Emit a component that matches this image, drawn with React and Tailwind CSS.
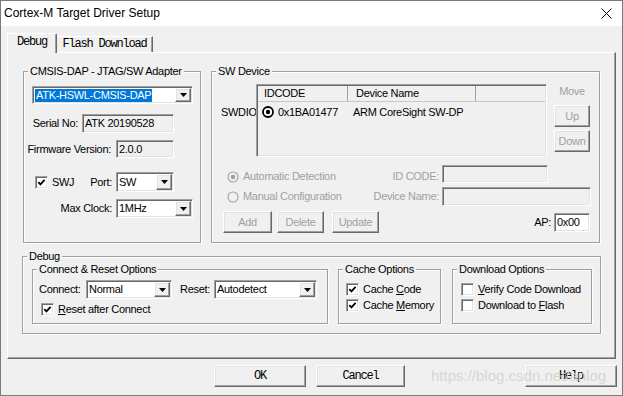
import React from 'react'

// classic win32 3D edges
const sunken = 'border border-t-[#a0a0a0] border-l-[#a0a0a0] border-r-white border-b-white shadow-[inset_1px_1px_0_#696969,inset_-1px_-1px_0_#e3e3e3]'
const raised = 'border border-t-white border-l-white border-r-[#696969] border-b-[#696969] shadow-[inset_-1px_-1px_0_#a0a0a0,inset_1px_1px_0_#e3e3e3]'
const group = 'border border-[#a0a0a0] shadow-[1px_1px_0_#fff,inset_1px_1px_0_#fff] min-w-0'
const legend = 'ml-[4px] px-[2px] bg-[#f0f0f0] leading-[13px]'
const mono = "font-['Liberation_Mono','DejaVu_Sans_Mono',monospace] text-[12px] tracking-[-1.2px]"

function Arrow() {
  return (
    <svg width="7" height="4" viewBox="0 0 7 4">
      <path d="M0 0h7L3.5 4z" fill="#000" />
    </svg>
  )
}

function Combo({ className, value, selected }) {
  return (
    <div className={`flex bg-white p-px ${sunken} ${className}`}>
      <div className="flex flex-1 items-center pl-[1px] overflow-hidden whitespace-nowrap">
        {selected ? (
          <span className="bg-[#0078d7] text-white leading-[13px] px-px">{value}</span>
        ) : (
          <span className="leading-[13px]">{value}</span>
        )}
      </div>
      <div className={`w-[16px] bg-[#f0f0f0] flex items-center justify-center ${raised}`}>
        <Arrow />
      </div>
    </div>
  )
}

function Field({ className, children, white }) {
  return (
    <div className={`flex items-center pl-[2px] whitespace-nowrap ${white ? 'bg-white' : 'bg-[#f0f0f0]'} ${sunken} ${className}`}>
      {children}
    </div>
  )
}

function Check({ checked }) {
  return (
    <div className={`w-[13px] h-[13px] shrink-0 bg-white flex items-center justify-center ${sunken}`}>
      {checked && (
        <svg width="9" height="9" viewBox="0 0 9 9">
          <path d="M1.3 4.2 L3.4 6.4 L7.6 1.8" stroke="#000" strokeWidth="1.8" fill="none" />
        </svg>
      )}
    </div>
  )
}

function Radio({ on, disabled }) {
  const c = disabled ? '#a0a0a0' : '#000'
  return (
    <svg width="12" height="12" viewBox="0 0 12 12" className="shrink-0">
      <circle cx="6" cy="6" r="5" fill={disabled ? '#f0f0f0' : '#fff'} stroke={c} strokeWidth={disabled ? 1.1 : 1.8} />
      {on && <circle cx="6" cy="6" r="2.2" fill={c} />}
    </svg>
  )
}

function Btn({ className, children, disabled, monoFont }) {
  return (
    <div className={`flex items-center justify-center bg-[#f0f0f0] ${raised} ${disabled ? 'text-[#a0a0a0]' : 'text-black'} ${monoFont ? mono : ''} ${className}`}>
      {children}
    </div>
  )
}

function App() {
  return (
    <div className="relative w-[623px] h-[396px] bg-[#f0f0f0] border border-[#7a7a7a] overflow-hidden flex flex-col text-[11px] leading-[13px] tracking-[-0.3px] text-black font-['Liberation_Sans',Arial,sans-serif]">
      {/* title bar */}
      <div className="h-[25px] shrink-0 bg-white flex items-center justify-between pl-[3px] pr-[10px]">
        <span className="text-[12px] tracking-normal">Cortex-M Target Driver Setup</span>
        <svg width="11" height="11" viewBox="0 0 11 11">
          <path d="M0.5 0.5L10.5 10.5M10.5 0.5L0.5 10.5" stroke="#000" strokeWidth="1" />
        </svg>
      </div>

      {/* tabs */}
      <div className={`flex items-end pl-[6px] mt-[7px] h-[19px] ${mono}`}>
        <div className="relative z-10 -mb-px h-[20px] w-[50px] bg-[#f0f0f0] border-t border-l border-r border-t-white border-l-white border-r-[#696969] shadow-[inset_-1px_0_0_#a0a0a0] rounded-t-[2px] flex items-center justify-center pb-[2px]">
          Debug
        </div>
        <div className="h-[16px] w-[96px] border-t border-r border-t-white border-r-[#696969] shadow-[inset_-1px_0_0_#a0a0a0] flex items-center justify-center">
          Flash Download
        </div>
      </div>

      {/* tab page */}
      <div className="ml-[6px] w-[609px] h-[307px] shrink-0 border border-t-white border-l-white border-r-[#696969] border-b-[#696969] shadow-[inset_-1px_-1px_0_#a0a0a0] pl-[15px] pt-[12px]">
        <div className="flex items-start gap-[10px]">
          {/* adapter */}
          <fieldset className={`${group} w-[178px] h-[178px]`}>
            <legend className={legend}>CMSIS-DAP - JTAG/SW Adapter</legend>
            <div className="pl-[8px] pt-[8px]">
              <Combo className="w-[161px] h-[18px]" value="ATK-HSWL-CMSIS-DAP" selected />
            </div>
            <div className="flex items-center mt-[10px]">
              <span className="w-[54px] text-right">Serial No:</span>
              <Field className="ml-[4px] w-[92px] h-[19px]">ATK 20190528</Field>
            </div>
            <div className="flex items-center mt-[7px]">
              <span className="w-[87px] text-right whitespace-nowrap">Firmware Version:</span>
              <Field className="ml-[5px] w-[58px] h-[18px]">2.0.0</Field>
            </div>
            <div className="flex items-center mt-[14px]">
              <div className="ml-[11px]">
                <Check checked />
              </div>
              <span className="ml-[4px] w-[30px]">SWJ</span>
              <span className="w-[30px] text-right">Port:</span>
              <Combo className="ml-[4px] w-[58px] h-[20px]" value="SW" />
            </div>
            <div className="flex items-center mt-[7px]">
              <span className="w-[88px] text-right">Max Clock:</span>
              <Combo className="ml-[4px] w-[77px] h-[19px]" value="1MHz" />
            </div>
          </fieldset>

          {/* sw device */}
          <fieldset className={`${group} w-[389px] h-[178px]`}>
            <legend className={legend}>SW Device</legend>
            <div className="flex items-start mt-[6px] pl-[9px]">
              <span className="w-[35px] mt-[22px]">SWDIO</span>
              <div className={`w-[291px] h-[73px] bg-[#f0f0f0] p-px flex flex-col ${sunken}`}>
                <div className="flex h-[16px] shrink-0 border-b border-[#c8c8c8]">
                  <div className="w-[90px] pl-[6px] flex items-center border-r border-[#a0a0a0]">IDCODE</div>
                  <div className="w-[128px] pl-[8px] flex items-center border-r border-[#a0a0a0]">Device Name</div>
                  <div className="flex-1" />
                </div>
                <div className="flex items-center h-[20px] pl-[4px]">
                  <Radio on />
                  <span className="ml-[4px] w-[71px]">0x1BA01477</span>
                  <span className="ml-[4px]">ARM CoreSight SW-DP</span>
                </div>
              </div>
              <div className="ml-[7px] w-[36px] flex flex-col items-center">
                <span className="mt-[1px] text-[#a0a0a0]">Move</span>
                <Btn disabled className="mt-[7px] w-[36px] h-[22px]">Up</Btn>
                <Btn disabled className="mt-[3px] w-[36px] h-[22px]">Down</Btn>
              </div>
            </div>

            <div className="flex items-start mt-[8px] text-[#a0a0a0]">
              <div className="w-[227px] flex items-center justify-between pl-[15px] mt-[5px]">
                <div className="flex items-center gap-[4px]">
                  <Radio on disabled />
                  <span>Automatic Detection</span>
                </div>
                <span>ID CODE:</span>
              </div>
              <Field className="ml-[3px] w-[106px] h-[18px]" />
            </div>
            <div className="flex items-center mt-[4px] text-[#a0a0a0]">
              <div className="w-[227px] flex items-center justify-between pl-[15px]">
                <div className="flex items-center gap-[4px]">
                  <Radio disabled />
                  <span>Manual Configuration</span>
                </div>
                <span>Device Name:</span>
              </div>
              <Field className="ml-[3px] w-[149px] h-[19px]" />
            </div>
            <div className="flex items-center mt-[5px]">
              <Btn disabled className="ml-[11px] w-[49px] h-[22px]">Add</Btn>
              <Btn disabled className="ml-[5px] w-[47px] h-[22px]">Delete</Btn>
              <Btn disabled className="ml-[8px] w-[47px] h-[22px]">Update</Btn>
              <span className="ml-auto">AP:</span>
              <Field white className="ml-[3px] mr-[9px] w-[36px] h-[19px]">0x00</Field>
            </div>
          </fieldset>
        </div>

        {/* debug */}
        <fieldset className={`${group} -ml-px mt-[7px] w-[579px] h-[84px]`}>
          <legend className={legend}>Debug</legend>
          <div className="flex items-start pl-[9px]">
            <fieldset className={`${group} w-[296px] h-[61px]`}>
              <legend className={legend}>Connect &amp; Reset Options</legend>
              <div className="flex items-center mt-[4px] pl-[6px]">
                <span className="w-[47px]">Connect:</span>
                <Combo className="w-[86px] h-[19px]" value="Normal" />
                <span className="ml-[8px] w-[34px]">Reset:</span>
                <Combo className="w-[103px] h-[19px]" value="Autodetect" />
              </div>
              <div className="flex items-center mt-[4px] pl-[8px]">
                <Check checked />
                <span className="ml-[4px]"><span className="underline">R</span>eset after Connect</span>
              </div>
            </fieldset>

            <fieldset className={`${group} ml-[10px] w-[103px] h-[61px]`}>
              <legend className={legend}>Cache Options</legend>
              <div className="flex items-center mt-[7px] pl-[7px]">
                <Check checked />
                <span className="ml-[4px]">Cache <span className="underline">C</span>ode</span>
              </div>
              <div className="flex items-center mt-[3px] pl-[7px]">
                <Check checked />
                <span className="ml-[4px]">Cache <span className="underline">M</span>emory</span>
              </div>
            </fieldset>

            <fieldset className={`${group} ml-[11px] w-[140px] h-[61px]`}>
              <legend className={legend}>Download Options</legend>
              <div className="flex items-center mt-[7px] pl-[8px]">
                <Check />
                <span className="ml-[4px]"><span className="underline">V</span>erify Code Download</span>
              </div>
              <div className="flex items-center mt-[3px] pl-[8px]">
                <Check />
                <span className="ml-[4px]">Download to <span className="underline">F</span>lash</span>
              </div>
            </fieldset>
          </div>
        </fieldset>
      </div>

      {/* dialog buttons */}
      <div className="flex mt-[6px] pl-[213px] pr-[5px]">
        <Btn monoFont className="w-[92px] h-[22px]">OK</Btn>
        <Btn monoFont className="ml-[10px] w-[89px] h-[22px]">Cancel</Btn>
        <Btn monoFont className="ml-auto w-[92px] h-[22px]">Help</Btn>
      </div>

      {/* watermark */}
      <span className="absolute left-[430px] top-[366px] text-[15px] leading-[18px] tracking-normal text-[#d6d6d6] pointer-events-none">
        https://blog.csdn.net/anlog
      </span>
    </div>
  )
}

export default App
